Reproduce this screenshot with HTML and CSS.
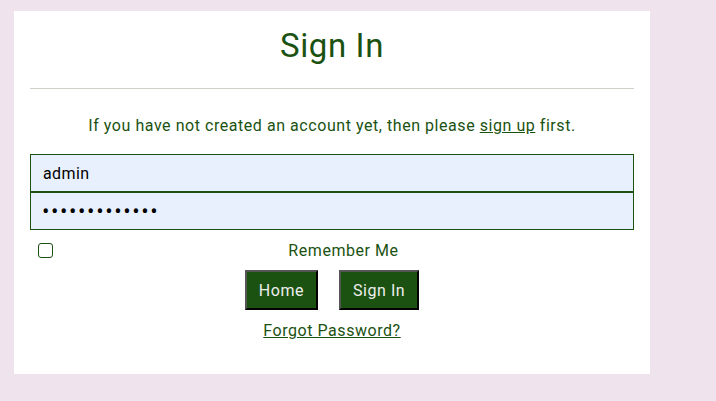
FILE: index.html
```html
<!DOCTYPE html>
<html lang="en">
<head>
<meta charset="utf-8">
<title>Sign In</title>
<link rel="stylesheet" href="styles.css">
</head>
<body>
<main class="card">
  <h1 class="title">Sign In</h1>
  <hr class="rule">
  <p class="intro">If you have not created an account yet, then please <a href="#" class="link">sign up</a> first.</p>
  <form class="form">
    <div class="fields">
      <input class="field" type="text" value="admin">
      <input class="field field-pass" type="password" value="adminpassword">
    </div>
    <label class="remember">
      <input class="check" type="checkbox">
      <span class="remember-text">Remember Me</span>
    </label>
    <div class="actions">
      <button type="button" class="btn">Home</button>
      <button type="button" class="btn">Sign In</button>
    </div>
    <a href="#" class="forgot">Forgot Password?</a>
  </form>
</main>
</body>
</html>
```
FILE: styles.css
```css
html, body {
  margin: 0;
  padding: 0;
  background: #efe3ee;
}
body {
  padding: 11px 14px;
  font-family: Roboto, "Liberation Sans", sans-serif;
  color: #1b5211;
  letter-spacing: 0.55px;
}
.card {
  width: 604px;
  height: 331px;
  background: #fff;
  padding: 16px 16px 16px 16px;
}
.title {
  margin: 0;
  font-size: 33px;
  font-weight: 400;
  line-height: 38px;
  text-align: center;
  color: #1b5211;
  letter-spacing: 0.6px;
}
.rule {
  margin: 23px 0 0;
  border: 0;
  border-top: 1px solid #cdd2c9;
}
.intro {
  margin: 27px 0 0;
  font-size: 16px;
  line-height: 19px;
  text-align: center;
}
.link {
  color: #1b5211;
}
.form {
  margin-top: 19px;
  display: flex;
  flex-direction: column;
}
.fields {
  display: flex;
  flex-direction: column;
}
.field {
  box-sizing: border-box;
  height: 38px;
  margin: 0;
  padding: 0 12px;
  border: 1px solid #1b5211;
  background: #e8f0fe;
  font-family: Roboto, "Liberation Sans", sans-serif;
  font-size: 16px;
  letter-spacing: 0.4px;
  color: #000;
  outline: none;
}
.field + .field {
  margin-top: -1px;
  border-top-width: 2px;
  height: 39px;
}
.field-pass {
  font-size: 22px;
  letter-spacing: 1.6px;
  padding-left: 11px;
}
.remember {
  display: flex;
  align-items: center;
  margin-top: 11px;
  height: 18px;
}
.check {
  appearance: none;
  -webkit-appearance: none;
  width: 15px;
  height: 15px;
  margin: 0 0 0 8px;
  border: 1px solid #1b5211;
  border-radius: 3px;
  background: #fff;
  box-sizing: border-box;
}
.remember-text {
  flex: 1;
  text-align: center;
  font-size: 16px;
}
.actions {
  display: flex;
  justify-content: center;
  gap: 21px;
  margin-top: 11px;
}
.btn {
  height: 40px;
  padding: 0 12px;
  background: #1b5211;
  color: #eeeeee;
  font-family: Roboto, "Liberation Sans", sans-serif;
  font-size: 16px;
  letter-spacing: 0.55px;
  border: 2px solid;
  border-color: #555 #000 #000 #555;
  border-radius: 0;
}
.forgot {
  align-self: center;
  margin-top: 11px;
  font-size: 16px;
  line-height: 19px;
  color: #1b5211;
}
```
